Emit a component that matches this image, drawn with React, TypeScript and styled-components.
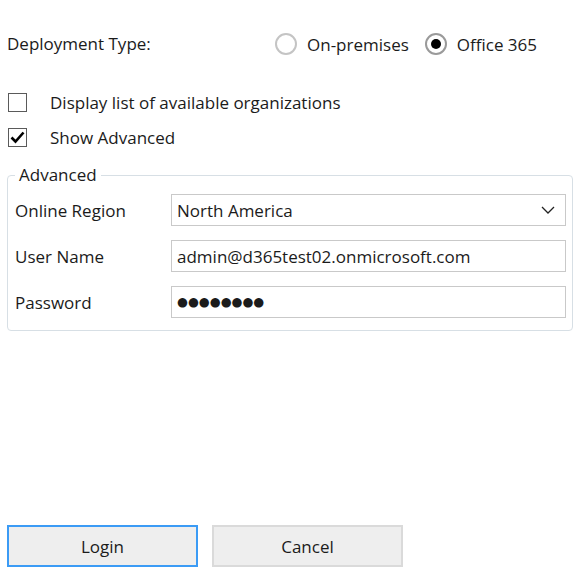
import React from 'react';
import styled, { createGlobalStyle } from 'styled-components';

const GlobalStyle = createGlobalStyle`
    html, body {
        margin: 0;
        padding: 0;
        background: #ffffff;
    }
    body {
        font-family: "Open Sans", "Noto Sans", sans-serif;
        font-size: 17px;
        color: #1b1b1b;
    }
`;

const Page = styled.div`
    width: 588px;
    height: 584px;
    box-sizing: border-box;
    display: flex;
    flex-direction: column;
    padding: 0 15px 17px 7px;
`;

const DeploymentRow = styled.div`
    display: flex;
    align-items: center;
    height: 24px;
    margin-top: 32px;
`;

const FieldLabel = styled.div<{ $width: number }>`
    width: ${p => p.$width}px;
    flex-shrink: 0;
    line-height: 24px;
`;

const RadioOption = styled.label`
    display: flex;
    align-items: center;
    gap: 10px;
    margin-right: 16px;
`;

const RadioCircle = styled.span<{ $checked?: boolean }>`
    width: 22px;
    height: 22px;
    box-sizing: border-box;
    border-radius: 50%;
    border: 2px solid ${p => (p.$checked ? '#9a9a9a' : '#c4c4c4')};
    display: flex;
    align-items: center;
    justify-content: center;
    &::after {
        content: '';
        display: ${p => (p.$checked ? 'block' : 'none')};
        width: 10px;
        height: 10px;
        border-radius: 50%;
        background: #000;
    }
`;

const CheckList = styled.div`
    display: flex;
    flex-direction: column;
    gap: 11px;
    margin-top: 34px;
`;

const CheckRow = styled.label`
    display: flex;
    align-items: center;
    height: 24px;
`;

const CheckBox = styled.span`
    width: 19px;
    height: 19px;
    box-sizing: border-box;
    border: 1px solid #5a5a5a;
    margin-left: 1px;
    margin-right: 23px;
    display: flex;
    align-items: center;
    justify-content: center;
`;

const GroupBox = styled.fieldset`
    margin: 15px 0 0 0;
    padding: 8px 6px 12px 7px;
    border: 1px solid #d7dfe5;
    border-radius: 4px;
    min-width: 0;
`;

const GroupLegend = styled.legend`
    padding: 0 4px;
    line-height: 22px;
`;

const FormGrid = styled.div`
    display: grid;
    grid-template-columns: 156px 1fr;
    grid-auto-rows: 32px;
    row-gap: 14px;
    align-items: center;
`;

const InputBox = styled.div`
    height: 32px;
    box-sizing: border-box;
    border: 1px solid #c9c9c9;
    display: flex;
    align-items: center;
    padding: 0 10px 0 5px;
    white-space: nowrap;
`;

const InputText = styled.span`
    flex: 1;
`;

const PasswordDots = styled.span`
    font-size: 12.5px;
    letter-spacing: 0;
    line-height: 1;
    font-family: "DejaVu Sans", sans-serif;
`;

const ButtonBar = styled.div`
    margin-top: auto;
    display: flex;
    gap: 14px;
`;

const Button = styled.button<{ $focused?: boolean }>`
    width: 191px;
    height: 42px;
    box-sizing: border-box;
    background: #eeeeee;
    border: 2px solid ${p => (p.$focused ? '#3b9bf5' : '#dadada')};
    font-family: inherit;
    font-size: 17px;
    color: #1b1b1b;
    padding: 0;
`;

const CheckMark = () => (
    <svg width="15" height="13" viewBox="0 0 15 13">
        <path d="M1.5 6.5 L5.5 10.5 L13.5 1.5" fill="none" stroke="#000" strokeWidth="2.6" />
    </svg>
);

const Chevron = () => (
    <svg width="14" height="8" viewBox="0 0 14 8">
        <path d="M1 1 L7 7 L13 1" fill="none" stroke="#222" strokeWidth="1.3" />
    </svg>
);

const App = () => (
    <>
        <GlobalStyle />
        <Page>
            <DeploymentRow>
                <FieldLabel $width={268}>Deployment Type:</FieldLabel>
                <RadioOption><RadioCircle />On-premises</RadioOption>
                <RadioOption><RadioCircle $checked />Office 365</RadioOption>
            </DeploymentRow>
            <CheckList>
                <CheckRow><CheckBox />Display list of available organizations</CheckRow>
                <CheckRow><CheckBox><CheckMark /></CheckBox>Show Advanced</CheckRow>
            </CheckList>
            <GroupBox>
                <GroupLegend>Advanced</GroupLegend>
                <FormGrid>
                    <div>Online Region</div>
                    <InputBox><InputText>North America</InputText><Chevron /></InputBox>
                    <div>User Name</div>
                    <InputBox><InputText>admin@d365test02.onmicrosoft.com</InputText></InputBox>
                    <div>Password</div>
                    <InputBox><PasswordDots>●●●●●●●●</PasswordDots></InputBox>
                </FormGrid>
            </GroupBox>
            <ButtonBar>
                <Button $focused>Login</Button>
                <Button>Cancel</Button>
            </ButtonBar>
        </Page>
    </>
);

export default App;
